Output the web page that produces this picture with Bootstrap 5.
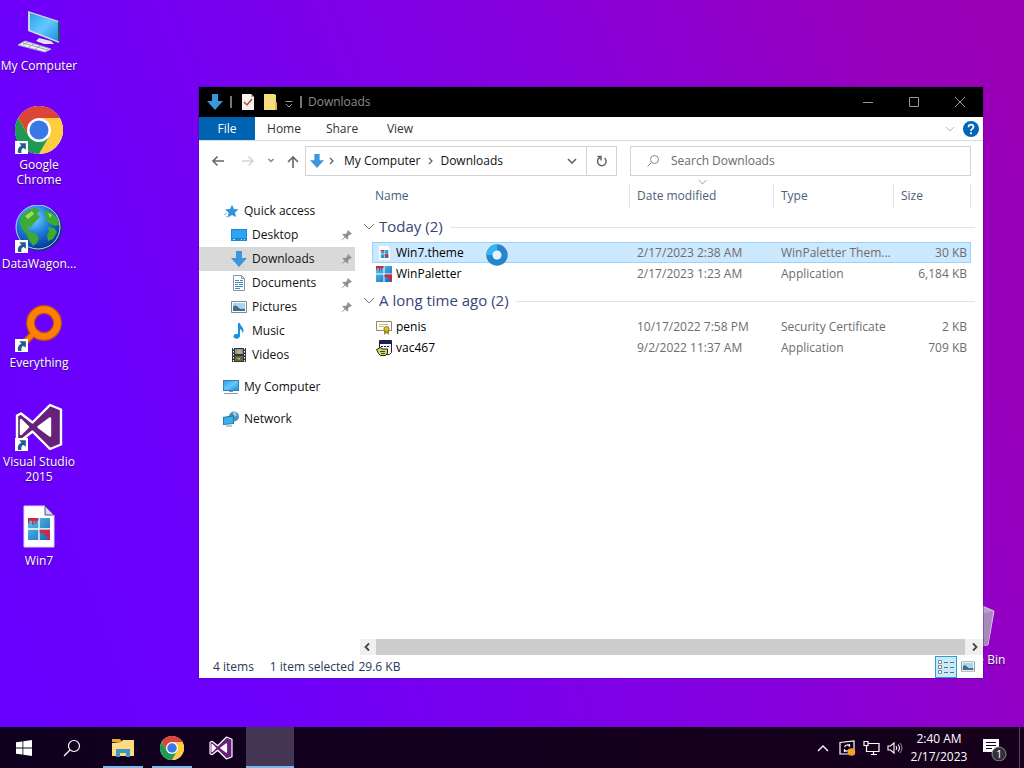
<!DOCTYPE html>
<html lang="en">
<head>
<meta charset="utf-8">
<meta name="viewport" content="width=device-width, initial-scale=1">
<title>Downloads</title>
<link href="https://cdn.jsdelivr.net/npm/bootstrap@5.3.0/dist/css/bootstrap.min.css" rel="stylesheet">
<style>
body { font-family: "Open Sans", "Noto Sans", sans-serif; font-size: 12px; line-height: 16px; color: #111; background: linear-gradient(70deg, #6600ff 0%, #6c00fc 20%, #8600dc 62%, #9800bc 88%, #9c00b4 100%); }
button { font: inherit; color: inherit; background: none; border: 0; padding: 0; }
a { color: inherit; text-decoration: none; }
svg { flex: none; display: block; }
.shortcut { width: 78px; height: 99px; padding-top: 7px; color: #fff; text-align: center; line-height: 15px; text-shadow: 0 1px 1px #0008; }
.shortcut svg { margin: 0 auto 3px; }
.bin { right: 11px; bottom: 34px; }
.explorer { left: 199px; top: 87px; right: 41px; bottom: 49px; background: #fff; box-shadow: 0 0 0 1px #4a0a9066; }
.titlebar { height: 30px; background: #000; color: #8c8c8c; }
.sysbtn { width: 46px; height: 30px; display: grid; place-items: center; }
.tabs { height: 24px; border-bottom: 1px solid #dadbdc; color: #333; }
.tabs .on { background: #0063b1; color: #fff; width: 56px; }
.tabs button { height: 23px; }
.tabs .tab { width: 58px; }
.expand { color: #aaa; }
.addressrow { padding: 5px 12px 0 10px; height: 35px; }
.addressbox, .searchbox { height: 30px; border: 1px solid #d2d2d2; }
.addressbox { width: 312px; }
.searchbox { margin-left: 13px; }
.searchbox input { border: 0; outline: 0; padding: 0; font: inherit; color: #666; }
.searchbox input::placeholder { color: #6b6b6b; opacity: 1; }
.reload { width: 30px; border-left: 1px solid #d2d2d2; height: 28px; }
.places { width: 156px; padding-top: 23px; }
.places a { height: 24px; display: flex; align-items: center; gap: 5px; padding-left: 24px; }
.places .sub { padding-left: 32px; padding-right: 2px; }
.places .sub svg:last-child { margin-left: auto; }
.places .on { background: #d9d9d9; }
.listing { padding: 5px 12px 0 13px; }
.files { width: 100%; table-layout: fixed; border-collapse: collapse; color: #6d6d6d; }
.files th { height: 29px; padding: 0 7px; font-weight: 400; color: #4c607a; vertical-align: middle; background: linear-gradient(#e5e5e5, #e5e5e5) right 0 top 2px / 1px 26px no-repeat; }
.files th:first-child { padding-left: 3px; }
.files td { height: 21px; padding: 0 7px; white-space: nowrap; overflow: hidden; vertical-align: middle; }
.files td:first-child { padding-left: 4px; color: #000; }
.files td:last-child { text-align: right; padding-right: 4px; }
.files .picked { background: #cce8ff; outline: 1px solid #99d1ff; outline-offset: -1px; }
.files .band th { height: 32px; font-size: 15px; color: #3a4479; background: none; padding: 0; }
.band .rule { height: 1px; background: #dfe4ec; flex: 1; margin: 2px -4px 0 7px; }
.band svg { margin-left: -9px; margin-right: 4px; color: #777; }
.col-date { width: 144px; }
.col-type { width: 120px; }
.col-size { width: 77px; }
.sortmark { right: 276px; top: 3px; color: #777; }
.busy { left: 286px; top: 156px; }
.hscroll { height: 16px; background: #f0f0f0; margin-left: 161px; }
.thumb { background: #cdcdcd; }
.status { height: 23px; color: #1e395b; padding: 0 4px 0 14px; }
.viewbtn { width: 22px; height: 22px; display: grid; place-items: center; }
.viewbtn.on { background: #cbe8f6; border: 1px solid #26a0da; }
.taskbar { height: 41px; background: linear-gradient(90deg, #10001f, #16001c); color: #fff; }
.taskbar button { width: 48px; display: grid; place-items: center; position: relative; }
.pinned { gap: 1px; padding-left: 3px; }
.taskbar .open::after { content: ""; position: absolute; left: 4px; right: 4px; bottom: 0; height: 2px; background: #76b9ed; }
.taskbar .now { background: #453753; }
.taskbar .now::after { left: 0; right: 0; }
.taskbar .tray { width: 24px; }
.taskbar .clock { width: 64px; line-height: 18px; padding-top: 1px; }
.peek { width: 5px; border-left: 1px solid #57465f; }
</style>
</head>
<body class="vh-100 d-flex flex-column overflow-hidden">
<svg width="0" height="0" class="position-absolute" aria-hidden="true">
<defs>
<linearGradient id="blue" x1="0" y1="0" x2="1" y2="1"><stop offset="0" stop-color="#2f9fe8"/><stop offset=".5" stop-color="#63c8ff"/><stop offset="1" stop-color="#1e90dc"/></linearGradient>
<linearGradient id="tile" x1="0" y1="0" x2="1" y2="1"><stop offset="0" stop-color="#5cc8ee"/><stop offset="1" stop-color="#1268b8"/></linearGradient>
<radialGradient id="sea" cx=".4" cy=".3" r=".7"><stop offset="0" stop-color="#7fd4ff"/><stop offset=".5" stop-color="#1e7fe0"/><stop offset="1" stop-color="#063a96"/></radialGradient>
</defs>
<symbol id="arrowbox" viewBox="0 0 12 12"><path fill="#fff" d="M0 0h12v12H0z"/><path fill="#235a8c" d="M4 2h6v6L8 6.500C6 7 5.500 8.500 6 11H3C2 8 3 5.500 6 4.300z"/></symbol>
<symbol id="chrome" viewBox="0 0 48 48"><circle cx="24" cy="24" r="24" fill="#fff"/><path fill="#db4437" d="M24 12h20.800A24 24 0 0 0 3.200 12l10.400 18z"/><path fill="#ffcd40" d="M44.800 12A24 24 0 0 1 24 48l10.400-18L24 12z"/><path fill="#1e9b50" d="M24 48A24 24 0 0 1 3.200 12l10.400 18L34.400 30z"/><circle cx="24" cy="24" r="12" fill="#fff"/><circle cx="24" cy="24" r="9.500" fill="#3b78e7"/></symbol>
<symbol id="vs" viewBox="0 0 48 48"><path fill="#68217a" stroke="#fff" stroke-width="2.400" stroke-linejoin="round" d="M35 2 46 6.500v35L35 46 17.500 28.500 6 37.500l-4-2V12.500l4-2 11.500 9zM35 15.500 23.500 24 35 32.500zM6 17v14l7-7z" fill-rule="evenodd"/><path fill="#fff" d="M35 15.500 23.500 24 35 32.500zM6 17v14l7-7z"/></symbol>
<symbol id="down" viewBox="0 0 16 16"><path fill="#3c96dc" d="M5 0h6v7h5l-8 9-8-9h5z"/></symbol>
<symbol id="pin" viewBox="0 0 12 12"><path fill="#8a9299" d="M7 1l4 4-1.200.6L9 5.400 7 7.500 7.200 10 6.500 10.600 4.200 8.400 1 11.300.700 11 3.600 7.800 1.400 5.500 2 4.800l2.500.200L6.600 3l-.2-1z"/></symbol>
<symbol id="caret" viewBox="0 0 12 7"><path fill="none" stroke="currentColor" d="M1 1l5 5 5-5"/></symbol>
<symbol id="photo" viewBox="0 0 16 12"><path fill="#fff" stroke="#7d8b96" d="M.5.500h15v11H.5z"/><path fill="#a8d5f0" d="M2 2h12v8H2z"/><path fill="#456f80" d="M2 6c2-3 4-1 6 1s4 0 6 1v2H2z"/></symbol>
<symbol id="win4" viewBox="0 0 16 16"><path fill="url(#tile)" d="M0 0h7.500v7.500H0zM8.500 0H16v7.500H8.500zM0 8.500h7.500V16H0zM8.500 8.500H16V16H8.500z"/><path fill="#c52b42" d="M0 0h7.500v2H6v2H5V2H4v3H3V2H1v2H0zM8.500 8.500H16V16h-2v-3h-2v-2H8.500z"/></symbol>
</svg>

<main class="flex-grow-1 position-relative">
<nav aria-label="Desktop">
<a href="#" class="shortcut d-block"><svg width="48" height="48" viewBox="0 0 48 48"><path fill="#c8d8e4" d="M13 4l31 10v22L13 24z"/><path fill="url(#blue)" d="M15 6l28 9v19L15 23z"/><path fill="#25506c" d="M43 14l2 1v20l-2-1z"/><path fill="#dfe6ec" d="M24 31l12 3 3 3-10 0-8-3z"/><path fill="#eef1f4" stroke="#a9b4be" d="M10 34l26 8-6 3L3 38z"/><path stroke="#9aa6b0" fill="none" d="M8 36l25 7M13 35l-5 3M19 37l-5 3M25 39l-5 3"/></svg>My Computer</a>
<a href="#" class="shortcut d-block"><svg width="48" height="48" viewBox="0 0 48 48"><use href="#chrome"/><use href="#arrowbox" y="35" width="13" height="13"/></svg>Google<br>Chrome</a>
<a href="#" class="shortcut d-block"><svg width="48" height="48" viewBox="0 0 48 48"><circle cx="24" cy="23" r="23" fill="#0a3a75"/><circle cx="23" cy="22" r="22" fill="url(#sea)" stroke="#b8dcf4"/><path fill="#3daa32" d="M6 12c4-5 9-9 15-9l4 2-3 4 3 3-5 5-4 5-4-1 2 5 7 3 3 4-2 5-4 3-4-6-3-7c-5-4-7-10-5-16zM31 5l6 3c5 4 7 8 7 12l-4 1-6-3-4-3 3-3-4-2zM33 22l6 1 3 4-4 7-5 2-1-6 2-3z"/><path fill="#9be061" d="M10 11l7-5 2 3-6 5zM33 8l4 2-2 3z"/><use href="#arrowbox" y="35" width="13" height="13"/></svg>DataWagon...</a>
<a href="#" class="shortcut d-block"><svg width="48" height="48" viewBox="0 0 48 48"><path stroke="#a65a1b" stroke-width="7" d="M19 29L6 42"/><circle cx="29" cy="19" r="13.500" fill="none" stroke="#b3541a" stroke-width="9"/><circle cx="29" cy="19" r="13.500" fill="none" stroke="#ff8000" stroke-width="6.500"/><path stroke="#ff8000" stroke-width="4.500" d="M20 28L6 42"/><use href="#arrowbox" y="35" width="13" height="13"/></svg>Everything</a>
<a href="#" class="shortcut d-block"><svg width="48" height="48" viewBox="0 0 48 48"><use href="#vs"/><use href="#arrowbox" y="35" width="13" height="13"/></svg>Visual Studio<br>2015</a>
<a href="#" class="shortcut d-block"><svg width="48" height="48" viewBox="0 0 48 48"><path fill="#fff" stroke="#d8d8e8" d="M9 4h21l9 9v32H9z"/><path fill="#d4daf4" stroke="#55508a" d="M30 4l9 9h-9z"/><use href="#win4" x="13" y="16" width="22" height="22"/></svg>Win7</a>
</nav>
<a href="#" class="shortcut bin position-absolute"><svg width="48" height="48" viewBox="0 0 48 48"><path fill="#b9a0cf" stroke="#d5c6e0" d="M6 8L30 4l14 6-6 34-20 3-9-5z"/><path fill="#a68abb" d="M32 13l11-3-5 34-7 2z"/></svg>Recycle Bin</a>

<section class="explorer position-absolute d-flex flex-column" aria-label="Downloads">
<header class="titlebar d-flex align-items-center ps-2">
<svg width="16" height="16"><use href="#down"/></svg>
<svg width="16" height="16"><path stroke="#777" stroke-width="2" d="M8 2v12"/></svg>
<svg width="16" height="16"><path fill="#f5f2f1" d="M3 0h9l3 3v13H3z"/><path fill="#aaa" d="M12 0l3 3h-3z"/><path fill="none" stroke="#b4522f" stroke-width="1.500" d="M5 8l3 3 5-6"/></svg>
<svg class="ms-2" width="16" height="16"><path fill="#f6dd7b" d="M1 0h10l2 1v7l1 1v7H1z"/><path fill="#d9b845" d="M12 8l2 1v7h-2z"/></svg>
<svg class="ms-1" width="12" height="16"><path fill="none" stroke="#999" d="M2.500 7.500h7M3 10l3 3 3-3"/></svg>
<svg width="13" height="16"><path stroke="#777" stroke-width="2" d="M6 2v12"/></svg>
<span>Downloads</span>
<div class="ms-auto d-flex">
<button class="sysbtn" aria-label="Minimize"><svg width="12" height="12"><path stroke="#999" d="M1 6.500h10"/></svg></button>
<button class="sysbtn" aria-label="Maximize"><svg width="12" height="12"><path fill="none" stroke="#999" d="M1.500 1.500h9v9h-9z"/></svg></button>
<button class="sysbtn" aria-label="Close"><svg width="12" height="12"><path stroke="#999" d="M1 1l10 10M11 1L1 11"/></svg></button>
</div>
</header>
<div class="tabs d-flex">
<button class="on">File</button><button class="tab">Home</button><button class="tab">Share</button><button class="tab">View</button>
<button class="expand ms-auto pe-2" aria-label="Expand ribbon"><svg width="10" height="6" viewBox="0 0 12 7"><use href="#caret"/></svg></button>
<button class="pe-1" aria-label="Help"><svg width="16" height="16"><circle cx="8" cy="8" r="8" fill="#0067b8"/><path fill="none" stroke="#fff" stroke-width="1.800" d="M5.500 6.200C5.500 2.500 10.500 3 10.500 6 10.500 7.700 8 7.700 8 10M8 11.300v2"/></svg></button>
</div>
<div class="addressrow d-flex align-items-center">
<button aria-label="Back"><svg width="18" height="14"><path fill="none" stroke="#666" stroke-width="1.600" d="M15 7H4M8.500 2.500L4 7l4.500 4.500"/></svg></button>
<button class="ms-2 ps-1" aria-label="Forward"><svg width="18" height="14"><path fill="none" stroke="#d5d5d5" stroke-width="1.600" d="M3 7h11M9.500 2.500L14 7l-4.500 4.500"/></svg></button>
<button class="ms-2" aria-label="Recent"><svg width="12" height="12"><path fill="none" stroke="#888" stroke-width="1.500" d="M3.500 4L6 6.500 8.500 4"/></svg></button>
<button class="ms-2" aria-label="Up"><svg width="16" height="16"><path fill="none" stroke="#666" stroke-width="1.600" d="M8 15V4M3 9l5-5 5 5"/></svg></button>
<div class="addressbox d-flex align-items-center ms-1 ps-1">
<svg class="me-1" width="14" height="16"><use href="#down" width="14"/></svg>
<svg width="8" height="10"><path fill="none" stroke="#666" stroke-width="1.300" d="M2 2l3 3-3 3"/></svg>
<a href="#" class="ms-2">My Computer</a>
<svg class="ms-2" width="8" height="10"><path fill="none" stroke="#666" stroke-width="1.300" d="M1 2l3 3-3 3"/></svg>
<a href="#" class="ms-1">Downloads</a>
<button class="ms-auto me-2" aria-label="Previous locations"><svg width="12" height="10"><path fill="none" stroke="#666" stroke-width="1.600" d="M2 3l4 4 4-4"/></svg></button>
<button class="reload d-grid justify-content-center align-content-center" aria-label="Refresh"><svg width="12" height="14"><path fill="none" stroke="#666" stroke-width="1.500" d="M4 3.500A4.300 4.300 0 1 0 8.500 4M1.500 2.500h3.500v4"/></svg></button>
</div>
<div class="searchbox flex-grow-1 d-flex align-items-center ps-3">
<svg class="me-2" width="16" height="14"><circle cx="7.500" cy="5.500" r="4" fill="none" stroke="#888"/><path stroke="#888" d="M4.500 8.500L.5 12.500"/></svg>
<input class="flex-grow-1" type="text" aria-label="Search Downloads" placeholder="Search Downloads">
</div>
</div>
<div class="d-flex flex-grow-1">
<nav class="places flex-shrink-0" aria-label="Places">
<a href="#"><svg width="16" height="16"><path fill="#2f95dc" d="M9 2l2 4 4.500.500L12 9.500l1 4.500-4-2-4 2.500.500-5L2 6.500 7 6z"/><path stroke="#7dbbe8" d="M1 12l3-2M3 14l2-1"/></svg><span>Quick access</span></a>
<a href="#" class="sub"><svg width="16" height="16"><path fill="#1689dc" d="M0 2h16v12H0z"/><path fill="#2ba5f2" d="M1 3h14v8H1z"/><path stroke="#bfe4fa" d="M2 12.500h2M10 12.500h1M13 12.500h1"/></svg>Desktop<svg width="12" height="12"><use href="#pin"/></svg></a>
<a href="#" class="sub on"><svg width="16" height="16"><use href="#down"/></svg>Downloads<svg width="12" height="12"><use href="#pin"/></svg></a>
<a href="#" class="sub"><svg width="16" height="16"><path fill="#fff" stroke="#8795a0" d="M2.500.500h8l3 3v12h-11z"/><path fill="none" stroke="#8795a0" d="M10.500.500v3h3"/><path stroke="#3b8ac4" d="M4 5.500h4M9 5.500h3M4 7.500h8M4 9.500h3M8 9.500h4M4 11.500h8M4 13.500h5"/></svg>Documents<svg width="12" height="12"><use href="#pin"/></svg></a>
<a href="#" class="sub"><svg width="16" height="12"><use href="#photo"/></svg>Pictures<svg width="12" height="12"><use href="#pin"/></svg></a>
<a href="#" class="sub"><svg width="16" height="16"><path fill="#1d8fe0" d="M7 0h2c0 3 4 4 3.500 8.500L11.500 10C11.500 7 9 6 9 6v6.500C9 17 2 16.500 2.500 13 3 11 5.500 10.500 7 11z"/></svg><span>Music</span></a>
<a href="#" class="sub"><svg width="16" height="16"><path fill="#333" d="M1 1h14v14H1z"/><path fill="#7e97c4" d="M4 2h8v5H4z"/><path fill="#5c6d45" d="M4 9h8v5H4z"/><path fill="#d3b64f" d="M6 4l3-1 2 3-4 1zM5 11h4v2z"/><path stroke="#fff" stroke-dasharray="1.500 1.500" d="M2.500 1v14M13.500 1v14"/></svg><span>Videos</span></a>
<a href="#" class="mt-2"><svg width="16" height="16"><path fill="#3a7fae" d="M0 1h16v11H0z"/><path fill="url(#blue)" d="M1 2h14v9H1z"/><path stroke="#8a99a5" d="M6 12.500h4M1 14.500h14"/></svg>My Computer</a>
<a href="#" class="mt-2"><svg width="16" height="16"><circle cx="11" cy="5.500" r="5" fill="#4b93bd"/><path fill="#90c9e4" d="M10 1h3l1 4-4 1z"/><path fill="#2378ad" d="M0 6l11-2v9L0 14z"/><path fill="#3fb0ec" d="M1 7l9-1.600v6.800L1 13z"/><path stroke="#7e96a5" d="M3 15h6"/></svg>Network</a>
</nav>
<div class="flex-grow-1 position-relative ms-1 listing">
<svg class="sortmark position-absolute" width="9" height="6" viewBox="0 0 12 7"><use href="#caret"/></svg>
<table class="files">
<colgroup><col><col class="col-date"><col class="col-type"><col class="col-size"></colgroup>
<thead><tr><th scope="col">Name</th><th scope="col">Date modified</th><th scope="col">Type</th><th scope="col">Size</th></tr></thead>
<tbody>
<tr class="band"><th colspan="4"><div class="d-flex align-items-center"><svg width="12" height="7"><use href="#caret"/></svg>Today (2)<span class="rule"></span></div></th></tr>
<tr class="picked"><td><div class="d-flex align-items-center gap-1"><svg width="16" height="16"><path fill="#fff" stroke="#dbe5ee" d="M2.500.500h9l3 3v12h-12z"/><use href="#win4" x="4.500" y="5" width="8" height="8"/></svg>Win7.theme</div></td><td>2/17/2023 2:38 AM</td><td>WinPaletter Them...</td><td>30 KB</td></tr>
<tr><td><div class="d-flex align-items-center gap-1"><svg width="16" height="16"><use href="#win4"/></svg>WinPaletter</div></td><td>2/17/2023 1:23 AM</td><td>Application</td><td>6,184 KB</td></tr>
<tr class="band"><th colspan="4"><div class="d-flex align-items-center"><svg width="12" height="7"><use href="#caret"/></svg>A long time ago (2)<span class="rule"></span></div></th></tr>
<tr><td><div class="d-flex align-items-center gap-1"><svg width="16" height="16"><path fill="#fffdf3" stroke="#8e8871" d="M.5 2.500h15v9H.5z"/><path stroke="#c6ba8b" d="M3 5.500h9M3 7.500h5"/><path fill="#a18b24" d="M8 11h5v5l-2.500-2L8 16z"/><circle cx="10.500" cy="10" r="2.500" fill="#d9c537" stroke="#8b7d1e"/></svg>penis</div></td><td>10/17/2022 7:58 PM</td><td>Security Certificate</td><td>2 KB</td></tr>
<tr><td><div class="d-flex align-items-center gap-1"><svg width="16" height="16"><path fill="#f6f6f6" stroke="#222" d="M3.500.500h12v12l-2 2h-10z"/><path fill="#161c70" d="M4 1h11v3H4z"/><path stroke="#222" stroke-dasharray="2 1" d="M5 6.500h8"/><path fill="#d5dc50" stroke="#222" d="M.5 9.500l3-1.500 1-1 1 2h6v4l-2 2.500h-5l-2-2z"/><path stroke="#444" d="M4 11.500h5M5 13.500h4"/></svg>vac467</div></td><td>9/2/2022 11:37 AM</td><td>Application</td><td>709 KB</td></tr>
</tbody>
</table>
</div>
</div>
<div class="hscroll d-flex">
<button class="px-1" aria-label="Scroll left"><svg width="8" height="10"><path fill="none" stroke="#444" stroke-width="1.800" d="M5 1.500L1.500 5 5 8.500"/></svg></button>
<div class="thumb flex-grow-1"></div>
<button class="px-1" aria-label="Scroll right"><svg width="10" height="10"><path fill="none" stroke="#444" stroke-width="1.800" d="M4 1.500L7.500 5 4 8.500"/></svg></button>
</div>
<footer class="status d-flex align-items-center">
<span>4 items</span><span class="ms-3">1 item selected</span><span class="ms-1">29.6 KB</span>
<button class="viewbtn on ms-auto" aria-label="Details"><svg width="16" height="14"><path fill="#fff" stroke="#7a8a96" d="M.5.500h3v3h-3zM.5 5.500h3v3h-3zM.5 10.500h3v3h-3z"/><path stroke="#53738c" stroke-dasharray="4 2" d="M6 2.500h10M6 7.500h10M6 12.500h10"/></svg></button>
<button class="viewbtn" aria-label="Large icons"><svg width="14" height="11" viewBox="0 0 16 12"><use href="#photo"/></svg></button>
</footer>
<svg class="busy position-absolute" width="24" height="24"><circle cx="12" cy="12" r="7.500" fill="none" stroke="#2785cd" stroke-width="6.500"/><path fill="none" stroke="#35b6ef" stroke-width="6" d="M4.500 12A7.500 7.500 0 0 1 12 4.500"/><circle cx="12" cy="12" r="4.500" fill="#e6f3fc"/></svg>
</section>
</main>

<footer class="taskbar d-flex align-items-stretch">
<button aria-label="Start"><svg width="16" height="16"><path fill="#fff" d="M0 2.300L6.500 1.400v6.200H0zM7.300 1.200L16 0v7.600H7.300zM0 8.400h6.500v6.200L0 13.700zM7.300 8.400H16V16l-8.700-1.200z"/></svg></button>
<button aria-label="Search"><svg width="18" height="18"><circle cx="11" cy="7" r="5.500" fill="none" stroke="#fff" stroke-width="1.200"/><path stroke="#fff" stroke-width="1.200" d="M7 11L1 17"/></svg></button>
<div class="pinned d-flex">
<button class="open" aria-label="File Explorer"><svg width="22" height="20"><path fill="#e8a33d" d="M0 1h8l2 3H0z"/><path fill="#fbdc7e" d="M0 5l9-1 2-2h11v16H0z"/><path fill="#3f94c8" d="M4 11h14v8h-4v-4H8v4H4z"/></svg></button>
<button class="open" aria-label="Google Chrome"><svg width="24" height="24"><use href="#chrome"/></svg></button>
<button aria-label="Visual Studio 2015"><svg width="24" height="24"><use href="#vs"/></svg></button>
<button class="open now" aria-label="WinPaletter"></button>
</div>
<button class="tray ms-auto" aria-label="Hidden icons"><svg width="12" height="8"><path fill="none" stroke="#fff" stroke-width="1.300" d="M1 7l5-5 5 5"/></svg></button>
<button class="tray" aria-label="Updates"><svg width="17" height="16"><path fill="none" stroke="#fff" stroke-width="1.200" d="M1 2.500L15 1v13H1zM5.500 7C6.500 4.500 9 4.500 10.500 6V4M10.500 9C9.500 11.500 7 11.500 5.500 10v2"/><circle cx="12.500" cy="12" r="3.800" fill="#f2a123"/></svg></button>
<button class="tray" aria-label="Network"><svg width="17" height="16"><path fill="none" stroke="#fff" stroke-width="1.200" d="M5 3.500h11v8H3.500V6M8 14.500h6M10.500 11.500v3M1 1.500h4v4H1z"/></svg></button>
<button class="tray" aria-label="Volume"><svg width="17" height="14"><path fill="none" stroke="#fff" stroke-width="1.100" d="M1 5h2.500L7 2v10L3.500 9H1zM9 5q1.500 2 0 4M11 3.500q3 3.500 0 7"/><path fill="none" stroke="#999" d="M13 2q4 5 0 10"/></svg></button>
<button class="clock text-nowrap"><span>2:40 AM<br>2/17/2023</span></button>
<button aria-label="1 notification"><svg width="26" height="26"><path fill="#fff" d="M1 4h16v13h-4l-3 3v-3H1z"/><path stroke="#16001c" d="M4 7.500h10M4 10.500h10M4 13.500h6"/><circle cx="17" cy="19" r="7" fill="#33303a" stroke="#8d8690"/><text x="14" y="23" fill="#fff" font-size="11">1</text></svg></button>
<div class="peek"></div>
</footer>
<script src="https://cdn.jsdelivr.net/npm/bootstrap@5.3.0/dist/js/bootstrap.bundle.min.js"></script>
</body>
</html>
